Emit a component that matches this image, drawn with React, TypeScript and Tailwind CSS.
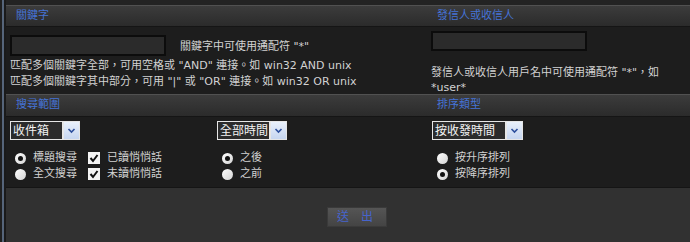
import React from 'react'

const Band = ({ left, right, h = 'h-[20px]' }: { left: string; right: string; h?: string }) => (
  <div className="border-t border-b border-t-[#515151] border-b-[#151515]">
    <div className={`grid grid-cols-[425px_1fr] items-center ${h} bg-gradient-to-b from-[#3c3c3c] to-[#2b2b2b] text-[11px] text-[#4573d6]`}>
      <div className="pl-[10px]">{left}</div>
      <div className="pl-[6px]">{right}</div>
    </div>
  </div>
)

const Select = ({ value, width }: { value: string; width: string }) => (
  <div className={`flex h-[19px] ${width} border border-[#e6e6e6] bg-[#e6e6e6]`}>
    <div className="flex flex-1 items-center bg-[#2b2b2b] pl-[2px] text-[12px] leading-none text-[#f2f2f2]">{value}</div>
    <div className="ml-[2px] flex w-[15px] items-center justify-center bg-gradient-to-b from-[#e9f0fb] to-[#c6d6f0]">
      <svg width="9" height="9" viewBox="0 0 9 9">
        <path d="M1.5 3 L4.5 6 L7.5 3" fill="none" stroke="#2d4f9c" strokeWidth="1.6" />
      </svg>
    </div>
  </div>
)

const Radio = ({ checked, label }: { checked?: boolean; label: string }) => (
  <div className="flex h-[16px] items-center">
    <span className="ml-[5px] flex h-[11px] w-[11px] items-center justify-center rounded-full bg-gradient-to-br from-[#ffffff] to-[#d4d4d4]">
      {checked && <span className="h-[5px] w-[5px] rounded-full bg-[#111]" />}
    </span>
    <span className="ml-[7px]">{label}</span>
  </div>
)

const Check = ({ label }: { label: string }) => (
  <div className="flex h-[16px] items-center">
    <span className="flex h-[12px] w-[12px] items-center justify-center bg-[#f4f4f4]">
      <svg width="10" height="10" viewBox="0 0 10 10">
        <path d="M1.5 5 L4 8 L8.5 2" fill="none" stroke="#111" strokeWidth="2" />
      </svg>
    </span>
    <span className="ml-[7px]">{label}</span>
  </div>
)

export default function App() {
  return (
    <div className="flex h-[242px] w-[690px] overflow-hidden bg-[#1d1d1d] font-['DejaVu_Sans','Noto_Sans_CJK_TC',sans-serif] text-[11px] text-[#d2d2d2]">
      <div className="w-[2px] bg-[#202020]" />
      <div className="w-[2px] bg-[#56657a]" />
      <div className="w-[2px] bg-[#1a1a1a]" />

      <div className="flex flex-1 flex-col">
        <div className="h-[5px] bg-[#232323]" />
        <Band left="關鍵字" right="發信人或收信人" />

        {/* keyword / sender */}
        <div className="grid h-[67px] grid-cols-[425px_1fr]">
          <div className="pl-[4px]">
            <div className="mt-[8px] flex items-center">
              <div className="h-[21px] w-[156px] border-2 border-[#0c0c0c] bg-[#2b2b2b]" />
              <span className="ml-[14px] mt-[3px]">關鍵字中可使用通配符 "*"</span>
            </div>
            <div className="mt-[2px] leading-[16px]">
              匹配多個關鍵字全部，可用空格或 "AND" 連接。如 win32 AND unix
              <br />
              匹配多個關鍵字其中部分，可用 "|" 或 "OR" 連接。如 win32 OR unix
            </div>
          </div>
          <div>
            <div className="mt-[4px] h-[20px] w-[156px] border-2 border-[#0c0c0c] bg-[#2b2b2b]" />
            <div className="mt-[14px] leading-[15px]">
              發信人或收信人用戶名中可使用通配符 "*"，如
              <br />
              *user*
            </div>
          </div>
        </div>

        <Band left="搜尋範圍" right="排序類型" h="h-[21px]" />

        {/* scope / order */}
        <div className="grid h-[70px] grid-cols-[211px_214px_1fr]">
          <div className="pl-[4px]">
            <div className="mt-[4px]">
              <Select value="收件箱" width="w-[70px]" />
            </div>
            <div className="mt-[10px] grid grid-cols-[78px_auto]">
              <Radio checked label="標題搜尋" />
              <Check label="已讀悄悄話" />
              <Radio label="全文搜尋" />
              <Check label="未讀悄悄話" />
            </div>
          </div>
          <div>
            <div className="mt-[4px]">
              <Select value="全部時間" width="w-[70px]" />
            </div>
            <div className="mt-[10px]">
              <Radio checked label="之後" />
              <Radio label="之前" />
            </div>
          </div>
          <div className="pl-[1px]">
            <div className="mt-[4px]">
              <Select value="按收發時間" width="w-[91px]" />
            </div>
            <div className="mt-[10px]">
              <Radio label="按升序排列" />
              <Radio checked label="按降序排列" />
            </div>
          </div>
        </div>

        {/* submit */}
        <div className="flex-1 border-t border-[#151515] bg-[#313131] pl-[321px] pt-[19px]">
          <button className="flex h-[20px] w-[60px] items-center justify-center border border-[#3a3a3a] bg-gradient-to-b from-[#555555] to-[#444444] text-[12px] tracking-[4px] text-[#4664cc]">
            送 出
          </button>
        </div>
      </div>
    </div>
  )
}
